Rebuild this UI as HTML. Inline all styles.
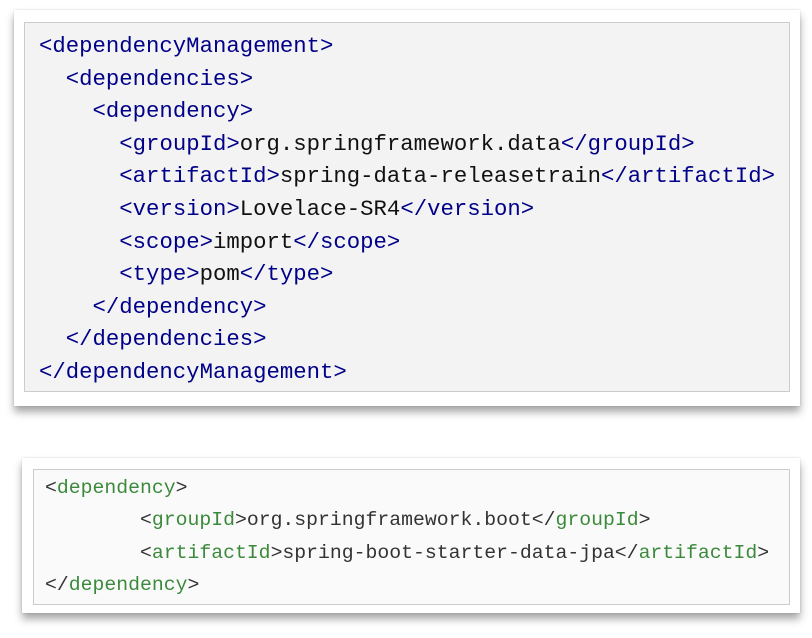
<!DOCTYPE html>
<html><head><style>
body{margin:0;width:812px;height:638px;background:#fff;position:relative;overflow:hidden;font-family:"Liberation Mono",monospace}
.f{position:absolute;background:#fff;box-shadow:0 6px 8px rgba(0,0,0,.35),0 0 2px rgba(0,0,0,.15)}
.b{position:absolute;white-space:pre}
.n{color:#000088}.g{color:#3b8a3b}
</style></head><body>
<div class="f" style="left:14px;top:10px;width:786px;height:396px"></div>
<div class="b" style="left:24px;top:22px;width:766px;height:370px;background:#f3f3f3;border:1px solid #ccc;box-sizing:border-box;padding:7px 0 0 14px;font-size:22.3px;line-height:32.6px;color:#111"><span class="n">&lt;dependencyManagement&gt;</span>
  <span class="n">&lt;dependencies&gt;</span>
    <span class="n">&lt;dependency&gt;</span>
      <span class="n">&lt;groupId&gt;</span>org.springframework.data<span class="n">&lt;/groupId&gt;</span>
      <span class="n">&lt;artifactId&gt;</span>spring-data-releasetrain<span class="n">&lt;/artifactId&gt;</span>
      <span class="n">&lt;version&gt;</span>Lovelace-SR4<span class="n">&lt;/version&gt;</span>
      <span class="n">&lt;scope&gt;</span>import<span class="n">&lt;/scope&gt;</span>
      <span class="n">&lt;type&gt;</span>pom<span class="n">&lt;/type&gt;</span>
    <span class="n">&lt;/dependency&gt;</span>
  <span class="n">&lt;/dependencies&gt;</span>
<span class="n">&lt;/dependencyManagement&gt;</span></div>
<div class="f" style="left:22px;top:458px;width:778px;height:155px"></div>
<div class="b" style="left:33px;top:469px;width:757px;height:136px;background:#fafafa;border:1px solid #ccc;box-sizing:border-box;padding:2px 0 0 11px;font-size:19.8px;line-height:32.4px;color:#333">&lt;<span class="g">dependency</span>&gt;
        &lt;<span class="g">groupId</span>&gt;org.springframework.boot&lt;/<span class="g">groupId</span>&gt;
        &lt;<span class="g">artifactId</span>&gt;spring-boot-starter-data-jpa&lt;/<span class="g">artifactId</span>&gt;
&lt;/<span class="g">dependency</span>&gt;</div>
</body></html>
